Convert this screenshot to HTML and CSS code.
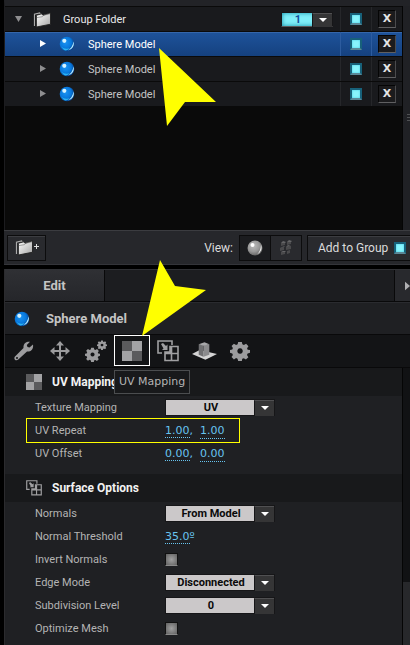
FILE: index.html
```html
<!DOCTYPE html>
<html lang="en">
<head>
<meta charset="utf-8">
<title>Sphere Model</title>
<link rel="stylesheet" href="styles.css">
</head>
<body>
<svg class="defs" aria-hidden="true">
  <defs>
    <radialGradient id="blue" cx="0.4" cy="0.4" r="0.65">
      <stop offset="0" stop-color="#1a93f2"/><stop offset="0.6" stop-color="#0878dc"/><stop offset="1" stop-color="#043a86"/>
    </radialGradient>
    <radialGradient id="grey" cx="0.4" cy="0.35" r="0.65">
      <stop offset="0" stop-color="#bbb"/><stop offset="0.6" stop-color="#999"/><stop offset="1" stop-color="#666"/>
    </radialGradient>
    <linearGradient id="paper" x1="0" y1="0" x2="1" y2="1">
      <stop offset="0" stop-color="#fff"/><stop offset="1" stop-color="#a4a4a4"/>
    </linearGradient>
    <symbol id="sphere" viewBox="0 0 16 16">
      <circle cx="8" cy="8" r="7.300" fill="url(#blue)"/>
      <path d="M9 14.500A7 7 0 0 0 14.500 5.500Q13.800 11 9 14.500Z" fill="#b9edff"/>
      <path d="M2 10.500Q6 14 11 12Q8 15.500 5 14Z" fill="#2ab4f5"/>
      <circle cx="5.300" cy="4.800" r="2.100" fill="#d4f2ff"/>
    </symbol>
    <symbol id="folder" viewBox="0 0 20 18">
      <path d="M1.500 16V3.500L7 2l1 2" fill="none" stroke="#aaa" stroke-width="1.200"/>
      <path d="M3.500 17V4.500L9 3l1.500 1.500L18.500 2v12Z" fill="url(#paper)" stroke="#222"/>
      <path d="M4 7l6-1 1-1.500 7-1.500" fill="none" stroke="#777" stroke-width=".7"/>
    </symbol>
    <symbol id="checker" viewBox="0 0 20 20">
      <path fill="#5b5b5d" d="M0 0h20v20H0z"/><path fill="#a3a3a5" d="M10 0h10v10H10zM0 10h10v10H0z"/>
    </symbol>
    <symbol id="surface" viewBox="0 0 22 22">
      <g fill="none" stroke="#a0a0a2" stroke-width="1.600">
        <path d="M5 13H1V1h14v4"/><path d="M8 20.500V12h5V6.500h8v14ZM14.500 6.500v14M8 13.500h13"/>
      </g>
      <path d="M4 4l2-1 3 3 1.500-1.500V10H5l1.500-1.500Z" fill="#a0a0a2"/>
    </symbol>
    <symbol id="gear" viewBox="0 0 22 22">
      <path fill-rule="evenodd" d="M9 1h4l.6 2.700 1.700.7L17.700 3l2.600 2.700-1.500 2.400.6 1.500L22 10v3l-2.600.8-.7 1.600 1.500 2.400-2.700 2.600-2.300-1.500-1.700.7L13 22H9l-.7-2.500-1.600-.7-2.400 1.500-2.600-2.600 1.500-2.400-.7-1.600L0 13v-3l2.500-.6.7-1.600-1.500-2.300L4.300 3l2.400 1.400 1.700-.7ZM11 8a3 3 0 1 0 .1 0Z"/>
    </symbol>
  </defs>
</svg>

<main class="app">
  <section class="scene">
    <ul class="layers">
      <li class="layer group">
        <span class="name">
          <button class="twist" aria-label="Collapse"><svg viewBox="0 0 8 8"><path d="M0 1h7L3.500 7Z"/></svg></button>
          <svg class="icon folder"><use href="#folder"/></svg>
          <span class="text">Group Folder</span>
          <span class="pick number"><select aria-label="Group"><option>1</option></select></span>
        </span>
        <span class="cell"><input type="checkbox" class="lit" aria-label="Visible" checked></span>
        <span class="cell"><button class="remove">X</button></span>
      </li>
      <li class="layer child selected">
        <span class="name">
          <button class="twist" aria-label="Expand"><svg viewBox="0 0 8 8"><path d="M1 0v7L7 3.500Z"/></svg></button>
          <svg class="icon sphere"><use href="#sphere"/></svg>
          <span class="text">Sphere Model</span>
        </span>
        <span class="cell"><input type="checkbox" class="lit" aria-label="Visible" checked></span>
        <span class="cell"><button class="remove">X</button></span>
      </li>
      <li class="layer child">
        <span class="name">
          <button class="twist" aria-label="Expand"><svg viewBox="0 0 8 8"><path d="M1 0v7L7 3.500Z"/></svg></button>
          <svg class="icon sphere"><use href="#sphere"/></svg>
          <span class="text">Sphere Model</span>
        </span>
        <span class="cell"><input type="checkbox" class="lit" aria-label="Visible" checked></span>
        <span class="cell"><button class="remove">X</button></span>
      </li>
      <li class="layer child">
        <span class="name">
          <button class="twist" aria-label="Expand"><svg viewBox="0 0 8 8"><path d="M1 0v7L7 3.500Z"/></svg></button>
          <svg class="icon sphere"><use href="#sphere"/></svg>
          <span class="text">Sphere Model</span>
        </span>
        <span class="cell"><input type="checkbox" class="lit" aria-label="Visible" checked></span>
        <span class="cell"><button class="remove">X</button></span>
      </li>
    </ul>
    <div class="rail"><span class="grip"></span></div>
  </section>

  <footer class="bar">
    <button class="push new" aria-label="New folder"><svg class="icon folder"><use href="#folder"/></svg><svg class="plus" viewBox="0 0 5 5"><path d="M2 0h1v2h2v1H3v2H2V3H0V2h2z"/></svg></button>
    <span class="view">View:</span>
    <span class="modes">
      <button class="mode on" aria-label="Solid"><svg viewBox="0 0 16 16"><circle cx="8" cy="8" r="7.500" fill="url(#grey)"/><circle cx="5.500" cy="5" r="2" fill="#fff"/><path d="M10 14.300A7 7 0 0 0 14 5Q13.500 11.500 10 14.300Z" fill="#eee"/></svg></button>
      <button class="mode" aria-label="Particles"><svg viewBox="0 0 16 16"><path fill="#4a4a4c" d="M3 3l4-1v3L3 6zM9 2l4-1v3L9 5zM2 8l4-1v3l-4 1zM8 7l5-1v3L8 10zM3 12l4-1v3l-4 1zM9 11l3-1v3l-3 1z"/><path fill="#656567" d="M3 3l2-2 3 1-1 1zM9 2l2-2 3 1-1 1zM2 8l2-1 3-1-1 1zM8 7l2-2 3 1zM3 12l2-1 3 0-1 1z"/></svg></button>
    </span>
    <label class="push add">Add to Group <input type="checkbox" class="lit" checked></label>
  </footer>

  <section class="editor">
    <nav class="tabs"><button class="tab">Edit</button><button class="next" aria-label="Next"><svg viewBox="0 0 6 10"><path d="M0 0l6 5-6 5z"/></svg></button></nav>
    <h1 class="title"><svg class="icon sphere"><use href="#sphere"/></svg>Sphere Model</h1>
    <div class="tools">
      <button class="tool" aria-label="Adjust"><svg viewBox="0 0 20 20"><path fill-rule="evenodd" d="M19 3.500l-3.500 3-2-.5-.7-2L16 .8C13 .2 9 2 9.500 7L1 15.500c-2 2.500 1 5 3.300 3L13 10.500c4 .5 6.700-2.500 6-7ZM3 16a1 1 0 1 1 0 2 1 1 0 0 1 0-2Z"/></svg></button>
      <button class="tool" aria-label="Move"><svg viewBox="0 0 20 20"><path d="M10 0l4 4.500h-3V9h4.500V6L20 10l-4.500 4v-3H11v4.500h3L10 20l-4-4.500h3V11H4.500v3L0 10l4.500-4v3H9V4.500H6Z"/></svg></button>
      <button class="tool" aria-label="Settings"><svg class="wide" viewBox="0 0 22 22"><use href="#gear" x="0" y="7" width="15" height="15"/><use href="#gear" x="12" y="0" width="10" height="10"/></svg></button>
      <button class="tool current" aria-label="UV"><svg><use href="#checker"/></svg><span class="tip" role="tooltip">UV Mapping</span></button>
      <button class="tool" aria-label="Surface"><svg class="wide"><use href="#surface"/></svg></button>
      <button class="tool" aria-label="Shadow"><svg class="broad" viewBox="0 0 26 20"><path fill="#d4d4d4" d="M0 13l8-4 18 4-12 6Z"/><path fill="#707072" d="M7 3l5 1v12l-5-2z"/><path fill="#8b8b8d" d="M12 4l6-1v11l-6 2z"/><path fill="#a8a8aa" d="M7 3l6-2 5 2-6 1.500z"/></svg></button>
      <button class="tool" aria-label="Options"><svg><use href="#gear"/></svg></button>
    </div>
    <div class="panes">
      <div class="sheet">
        <h2 class="head"><svg class="mark"><use href="#checker"/></svg>UV Mapping</h2>
        <div class="fields">
          <div class="field"><label for="tex">Texture Mapping</label><span class="pick"><select id="tex"><option>UV</option></select></span></div>
          <div class="field marked"><span>UV Repeat</span><span class="values"><span><a href="#x">1.00</a>,</span><a href="#y">1.00</a></span></div>
          <div class="field"><span>UV Offset</span><span class="values"><span><a href="#x">0.00</a>,</span><a href="#y">0.00</a></span></div>
        </div>
        <h2 class="head"><svg class="mark"><use href="#surface"/></svg>Surface Options</h2>
        <div class="fields last">
          <div class="field"><label for="nor">Normals</label><span class="pick"><select id="nor"><option>From Model</option></select></span></div>
          <div class="field"><span>Normal Threshold</span><span class="values"><span><a href="#t">35.0</a>º</span></span></div>
          <div class="field"><label for="inv">Invert Normals</label><input type="checkbox" class="dim" id="inv"></div>
          <div class="field"><label for="edge">Edge Mode</label><span class="pick"><select id="edge"><option>Disconnected</option></select></span></div>
          <div class="field"><label for="sub">Subdivision Level</label><span class="pick"><select id="sub"><option>0</option></select></span></div>
          <div class="field"><label for="opt">Optimize Mesh</label><input type="checkbox" class="dim" id="opt"></div>
        </div>
      </div>
      <div class="scroll"><span class="thumb"></span></div>
    </div>
  </section>
</main>

<svg class="pointers" width="410" height="345" aria-hidden="true">
  <path d="M159 48L216 102H185L167 126Z"/>
  <path d="M160 260L175 286L206 290L142 336Z"/>
</svg>
</body>
</html>
```
FILE: styles.css
```css
* { box-sizing: border-box; }

body {
  margin: 0;
  background: #000;
  color: #c4c4c4;
  font: 12px/16px Roboto, "Noto Sans", sans-serif;
}

button, select, input { margin: 0; padding: 0; border: 0; font: inherit; color: inherit; }
button { background: none; display: flex; align-items: center; justify-content: center; }
ul, h1, h2 { margin: 0; padding: 0; list-style: none; }
svg { display: block; flex: none; }
.defs { position: absolute; width: 0; height: 0; }

.app { min-height: 100vh; display: flex; flex-direction: column; padding-left: 4px; }

/* Layer list */
.scene {
  flex: 1;
  display: flex;
  border-top: 6px solid #222327;
  border-left: 1px solid #1c1c1f;
  background: #0a0a0a;
}
.layers { flex: 1; border-top: 1px solid #0a0a0a; }
.layer {
  display: grid;
  grid-template-columns: 1fr 31px 31px;
  height: 25px;
  background: #191a1d;
  border-bottom: 1px solid #0a0a0a;
}
.name { display: flex; align-items: center; min-width: 0; }
.cell { display: flex; align-items: center; justify-content: center; border-left: 1px solid #26272a; }
.text { font-size: 11px; line-height: 14px; padding-top: 1px; }
.twist { width: 8px; height: 8px; margin-left: 34px; fill: #8e8e90; }
.twist svg { width: 8px; height: 8px; }
.group .twist { margin-left: 10px; }
.group { color: #e8e8e8; }
.group .folder { margin: 0 11px 0 10px; }
.folder { width: 19px; height: 17px; }
.sphere { width: 16px; height: 16px; }
.child .sphere { margin: 0 13px 0 12px; }
.selected { background: linear-gradient(#1e539b, #15417f); box-shadow: inset 0 1px #3566aa; color: #fff; }
.selected .twist { fill: #fff; }
.selected .cell { border-color: #2d5c9f; }

.lit {
  appearance: none;
  flex: none;
  width: 12px;
  height: 12px;
  background: #88f4fc;
  border: 2px solid #17617a;
  border-bottom-color: #5b8796;
  box-shadow: inset 0 0 2px #38c4e0;
}
.remove {
  width: 18px;
  height: 18px;
  background: #1b1b1d;
  border: 1px solid #050505;
  border-bottom-color: #606062;
  border-right-color: #4a4a4c;
  color: #e4e4e4;
  font: bold 11px/14px "DejaVu Sans", sans-serif;
}
.rail { width: 8px; background: #202125; border-left: 1px solid #050505; padding: 108px 0 0 4px; }
.grip { display: block; height: 8px; background: repeating-linear-gradient(#505154 0 1px, transparent 1px 3px); }

/* Drop-downs: pale value with a dark arrow box */
.pick { position: relative; display: flex; width: 110px; height: 17px; border: 1px solid #161618; }
.pick select {
  appearance: none;
  width: 100%;
  padding-right: 18px;
  background: #cbc8c9;
  color: #0a0a0a;
  font: bold 11px/15px Roboto, sans-serif;
  text-align: center;
  text-align-last: center;
  border-radius: 0;
}
.pick::before {
  content: "";
  position: absolute;
  right: 0;
  top: 0;
  width: 19px;
  height: 100%;
  background: #353536;
  border-top: 1px solid #505052;
  border-left: 1px solid #161618;
  pointer-events: none;
}
.pick::after {
  content: "";
  position: absolute;
  right: 5px;
  top: 6px;
  border: 4px solid transparent;
  border-top-color: #fff;
  border-bottom: 0;
  pointer-events: none;
}
.number { width: 52px; height: 15px; margin: 0 7px 0 auto; border-bottom-color: #5a5a5c; }
.number select { background: #7eeef8; color: #124f9c; line-height: 13px; box-shadow: inset 0 0 4px #138ca5; }
.number::after { top: 5px; }

/* Footer of the layer list */
.bar {
  display: flex;
  align-items: center;
  height: 35px;
  padding: 0 0 0 3px;
  background: #26272b;
  border-top: 1px solid #3b3c40;
  border-bottom: 1px solid #34353a;
  margin-bottom: 4px;
  color: #dcdcdc;
}
.push { height: 26px; background: #292a2e; border: 1px solid #0c0c0d; box-shadow: inset 0 1px #3c3d41; }
.new { width: 39px; }
.plus { width: 5px; height: 5px; margin-top: -3px; fill: #ddd; }
.view { margin: 0 6px 0 auto; }
.modes { display: flex; border: 1px solid #0c0c0d; margin-right: 5px; }
.mode { width: 30px; height: 24px; background: #292a2e; }
.mode.on { width: 31px; background: #1b1c1f; border-right: 1px solid #0c0c0d; }
.mode svg { width: 16px; height: 16px; }
.add { display: flex; align-items: center; justify-content: space-between; width: 103px; padding: 0 4px 0 10px; border-right: 0; white-space: nowrap; }

/* Editor */
.editor { background: #1f2023; border-left: 1px solid #2b2b2e; }
.tabs { display: flex; justify-content: space-between; height: 33px; background: #1c1d20; border-top: 1px solid #303135; border-bottom: 1px solid #09090a; }
.tab { width: 100px; background: linear-gradient(#2f3034, #25262a); border-right: 1px solid #09090a; font-weight: bold; font-size: 13px; }
.next { width: 16px; justify-content: flex-end; background: #28292d; border-left: 1px solid #09090a; fill: #b0b0b2; }
.next svg { width: 5px; height: 10px; }
.title {
  display: flex;
  align-items: center;
  gap: 16px;
  height: 33px;
  padding-left: 9px;
  border-top: 1px solid #2a2b2f;
  border-bottom: 1px solid #09090a;
  font-size: 13px;
  font-weight: bold;
}
.tools { display: flex; height: 33px; background: #131416; border-bottom: 1px solid #09090a; padding-left: 1px; }
.tool { position: relative; width: 36px; height: 32px; fill: #9c9c9e; }
.tool svg { width: 20px; height: 20px; }
.tool svg.wide { width: 22px; height: 22px; }
.tool svg.broad { width: 25px; height: 20px; }
.current { height: 31px; border: 1px solid #fff; }
.tip {
  position: absolute;
  left: -1px;
  top: 34px;
  padding: 3px 4px 4px;
  background: #18191b;
  border: 1px solid #4b4d4f;
  color: #b4b4b4;
  font: 11px/15px "DejaVu Sans", sans-serif;
  white-space: nowrap;
  z-index: 1;
}
.panes { display: flex; }
.sheet { flex: 1; }
.head { display: flex; align-items: center; gap: 10px; height: 28px; padding-left: 21px; background: #18191b; color: #f2f2f2; font-size: 12px; font-weight: bold; }
.mark { width: 16px; height: 16px; }
.fields { padding-bottom: 9px; }
.last { padding-bottom: 5px; }
.field {
  display: grid;
  grid-template-columns: 130px 1fr;
  align-items: center;
  height: 23px;
  padding-left: 30px;
  font-size: 11px;
  color: #b4b4b4;
}
.marked {
  width: 214px;
  height: 25px;
  margin: -1px 0 -1px 21px;
  padding-left: 8px;
  border: 1px solid #ff0;
}
.values { display: flex; gap: 7px; color: #67c4ef; font: 11px/14px "DejaVu Sans", sans-serif; padding-top: 1px; }
.values a { color: inherit; text-decoration: none; border-bottom: 1px dotted #67c4ef; }
.dim {
  appearance: none;
  width: 13px;
  height: 13px;
  background: radial-gradient(#a0a0a0, #606060);
  border: 1px solid #111;
  border-bottom-color: #8a8a8a;
}
.scroll { width: 8px; display: flex; flex-direction: column; justify-content: flex-end; background: #111214; border-left: 1px solid #050505; }
.thumb { height: 63px; background: #27282b; }

.pointers { position: absolute; left: 0; top: 0; fill: #ff0; pointer-events: none; z-index: 2; }
```
